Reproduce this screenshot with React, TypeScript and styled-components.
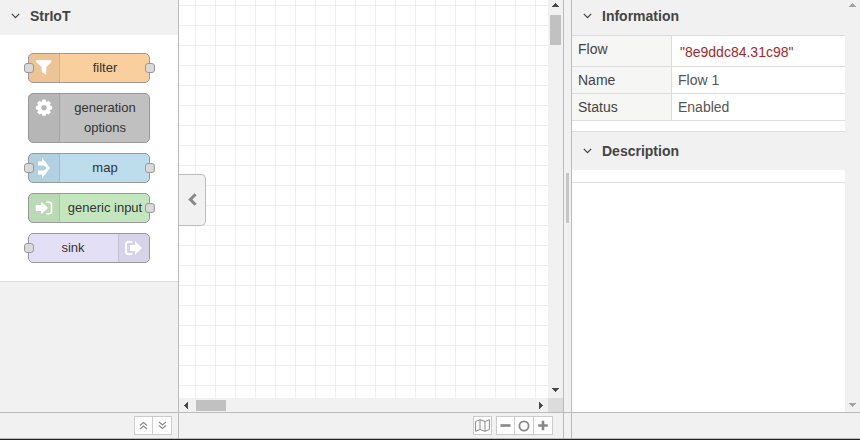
import React from "react";
import styled, { createGlobalStyle } from "styled-components";

const Global = createGlobalStyle`
  *, *::before, *::after { box-sizing: border-box; }
  body { margin: 0; background: #f1f1f1; overflow: hidden; }
  svg { display: block; flex: none; }
`;

const Editor = styled.div`
  width: 860px;
  height: 440px;
  display: grid;
  grid-template-columns: 179px 385px 7px 289px;
  grid-template-rows: 412px 27px 1px;
  overflow: hidden;
  background: #f1f1f1;
  font: 14px/20px "Liberation Sans", Arial, sans-serif;
  color: #444;
`;

const Palette = styled.section`
  border-right: 1px solid #bbb;
  overflow: hidden;
`;

const Header = styled.h3<{ $height: number; $ruled?: boolean }>`
  margin: 0;
  height: ${(p) => p.$height}px;
  display: flex;
  align-items: center;
  gap: 10px;
  padding: 0 0 ${(p) => (p.$ruled ? 1 : 3)}px 11px;
  font-size: 14px;
  font-weight: bold;
  line-height: 20px;
  background: #f1f1f1;
  color: #444;
  border-top: ${(p) => (p.$ruled ? "1px solid #ddd" : "none")};
`;

const NodeList = styled.div`
  display: flex;
  flex-direction: column;
  gap: 10px;
  height: 247px;
  padding: 18px 28px 0;
  background: #fff;
  border-bottom: 1px solid #ddd;
`;

const Node = styled.div<{ $color: string; $reverse?: boolean; $tall?: boolean }>`
  position: relative;
  display: flex;
  flex-direction: ${(p) => (p.$reverse ? "row-reverse" : "row")};
  width: 122px;
  height: ${(p) => (p.$tall ? 50 : 30)}px;
  flex: none;
  border: 1px solid #999;
  border-radius: 5px;
  background: ${(p) => p.$color};
`;

const NodeIcon = styled.div<{ $reverse?: boolean }>`
  width: 31px;
  flex: none;
  display: flex;
  justify-content: center;
  height: 100%;
  color: #fff;
  background: rgba(0, 0, 0, 0.05);
  border-${(p) => (p.$reverse ? "left" : "right")}: 1px solid rgba(0, 0, 0, 0.1);
  border-radius: ${(p) => (p.$reverse ? "0 4px 4px 0" : "4px 0 0 4px")};
  svg { height: 28px; width: 30px; }
`;

const NodeLabel = styled.div<{ $reverse?: boolean }>`
  flex: 1;
  padding: ${(p) => (p.$reverse ? "4px 1px 0 0" : "4px 0 0 1px")};
  text-align: center;
  font-size: 13px;
  line-height: 20px;
  color: #333;
  white-space: pre;
`;

const Port = styled.span<{ $side: "left" | "right" }>`
  position: absolute;
  top: 9px;
  ${(p) => p.$side}: ${(p) => (p.$side === "left" ? "-5px" : "-6px")};
  width: 10px;
  height: 10px;
  border: 1px solid #999;
  border-radius: 3px;
  background: #d9d9d9;
`;

const Workspace = styled.section`
  position: relative;
  display: grid;
  grid-template-columns: 369px 15px;
  grid-template-rows: 398px 14px;
  border-right: 1px solid #bbb;
`;

const Canvas = styled.div`
  background-color: #fff;
  background-image: linear-gradient(to right, #eee 1px, transparent 1px),
    linear-gradient(to bottom, #eee 1px, transparent 1px);
  background-size: 20px 20px;
  background-position: 16px 0, 0 5px;
`;

const VScroll = styled.div`
  display: flex;
  flex-direction: column;
  align-items: center;
  padding-bottom: 3px;
  background: #f1f1f1;
  color: #484848;
`;

const HScroll = styled.div`
  display: flex;
  align-items: center;
  background: #f1f1f1;
  color: #484848;
`;

const VThumb = styled.div`
  width: 11px;
  height: 30px;
  margin-bottom: auto;
  background: #c1c1c1;
`;

const HThumb = styled.div`
  width: 30px;
  height: 11px;
  margin-right: auto;
  background: #c1c1c1;
`;

const Corner = styled.div`
  background: #dcdcdc;
`;

const Collapse = styled.button`
  position: absolute;
  left: 0;
  top: 174px;
  width: 27px;
  height: 52px;
  padding: 0 0 1px 1px;
  display: flex;
  align-items: center;
  justify-content: center;
  border: 1px solid #bbb;
  border-left: 0;
  border-radius: 0 5px 5px 0;
  background: #f1f1f1;
  color: #888;
`;

const Separator = styled.div`
  display: flex;
  align-items: center;
  justify-content: center;
  padding-bottom: 16px;
`;

const Grip = styled.div`
  width: 3px;
  height: 50px;
  background: #c6c6c6;
`;

const Sidebar = styled.section`
  display: grid;
  grid-template-columns: 273px 15px;
  border-left: 1px solid #bbb;
  background: #fff;
`;

const FaintScroll = styled(VScroll)`
  justify-content: space-between;
  padding-bottom: 2px;
  color: #a3a3a3;
`;

const Properties = styled.div`
  display: grid;
  grid-template-columns: 100px 173px;
  grid-template-rows: 31px 27px 27px;
  height: 96px;
  border-top: 1px solid #ddd;
`;

const PropName = styled.div`
  padding: 3px 6px 0;
  background: #f6f6f4;
  color: #444;
  border-right: 1px solid #ddd;
  border-bottom: 1px solid #ddd;
`;

const PropValue = styled.div<{ $code?: boolean }>`
  padding: ${(p) => (p.$code ? "6px 8px 0" : "3px 6px 0")};
  color: ${(p) => (p.$code ? "#a0282e" : "#555")};
  border-bottom: 1px solid #ddd;
`;

const EmptyDescription = styled.div`
  height: 13px;
  border-bottom: 1px solid #ddd;
`;

const Footer = styled.footer<{ $divider?: boolean; $start?: boolean; $end: number }>`
  display: flex;
  justify-content: flex-end;
  align-items: flex-start;
  gap: 4px;
  padding: 3px ${(p) => p.$end}px 0 0;
  border-top: 1px solid #bbb;
  border-bottom: 1px solid #bbb;
  border-right: ${(p) => (p.$divider ? "1px solid #bbb" : "none")};
  border-left: ${(p) => (p.$start ? "1px solid #bbb" : "none")};
`;

const ButtonGroup = styled.div`
  display: flex;
  border: 1px solid #ccc;
  background: #fff;
`;

const ToolButton = styled.button<{ $width?: number }>`
  width: ${(p) => p.$width ?? 17}px;
  height: 17px;
  padding: 0;
  display: flex;
  align-items: center;
  justify-content: center;
  border: 0;
  background: transparent;
  color: #888;
  & + & { border-left: 1px solid #ccc; }
`;

const BottomEdge = styled.div`
  grid-column: 1 / -1;
  background: #222;
`;

type Direction = "up" | "down" | "left" | "right";
const arrowPaths: Record<Direction, string> = {
  up: "M7 3h1v1h1v1h1v1h1v1H4V6h1V5h1V4h1z",
  down: "M4 8h7v1h-1v1H9v1H8v1H7v-1H6v-1H5V9H4z",
  left: "M5 7h1V6h1V5h1V4h1v7H8v-1H7V9H6V8H5z",
  right: "M8 4h1v1h1v1h1v1h1v1h-1v1h-1v1H9v1H8z",
};

const ScrollArrow = ({ to }: { to: Direction }) => {
  const horizontal = to === "left" || to === "right";
  return (
    <svg
      width={horizontal ? 17 : 15}
      height={horizontal ? 14 : 15}
      viewBox={horizontal ? "0 0 17 14" : "0 0 15 15"}
      fill="currentColor"
      shapeRendering="crispEdges"
    >
      <path d={arrowPaths[to]} />
    </svg>
  );
};

const AngleDown = () => (
  <svg width="9" height="6" viewBox="0 0 9 6" fill="none" stroke="currentColor" strokeWidth="1.25">
    <path d="M.8 .9 4.5 4.6 8.2 .9" />
  </svg>
);

type IconKind = "funnel" | "gear" | "arrows" | "arrowIn" | "arrowOut";

const gearTeeth = [0, 45, 90, 135, 180, 225, 270, 315];

const Glyph = ({ kind }: { kind: IconKind }) => (
  <svg viewBox="0 0 30 28" fill="currentColor">
    {kind === "funnel" && <path d="M7 6.2h15.6l-.4 2-5 5.1v7.8l-4.5-3.3v-4.5l-5.3-5z" />}
    {kind === "gear" && (
      <g transform="translate(15 13.7)">
        {gearTeeth.map((angle) => (
          <path key={angle} transform={`rotate(${angle})`} d="M-2.4-5-1.6-8.1h3.2L2.4-5z" />
        ))}
        <circle r="4.6" fill="none" stroke="currentColor" strokeWidth="3.6" />
      </g>
    )}
    {kind === "arrows" && (
      <path
        fillRule="evenodd"
        d="M9 7.4h4V3.4L21 14l-8 10.6v-4H9v-4h6l2.8-2.6L15 11.4H9z"
      />
    )}
    {kind === "arrowIn" && (
      <>
        <path d="M6.8 11h5.3V7.8l7 6.2-7 6.2V17H6.8z" />
        <path d="M17.4 8.3h3q2.1 0 2.1 2.1v7.2q0 2.1-2.1 2.1h-3" fill="none" stroke="currentColor" strokeWidth="1.6" />
      </>
    )}
    {kind === "arrowOut" && (
      <>
        <path d="M11 11h5V7.3l7 6.7-7 6.7V17h-5z" />
        <path d="M13.2 7.8H9.3Q7 7.8 7 10.1v7.8q0 2.3 2.3 2.3h3.9" fill="none" stroke="currentColor" strokeWidth="1.7" />
      </>
    )}
  </svg>
);

interface NodeType {
  label: string;
  color: string;
  icon: IconKind;
  input?: boolean;
  output?: boolean;
  reverse?: boolean;
  tall?: boolean;
}

const nodeTypes: NodeType[] = [
  { label: "filter", color: "#f9cf9e", icon: "funnel", input: true, output: true },
  { label: "generation\noptions", color: "#c0c0c0", icon: "gear", tall: true },
  { label: "map", color: "#bddcec", icon: "arrows", input: true, output: true },
  { label: "generic input", color: "#c4e6bf", icon: "arrowIn", output: true },
  { label: "sink", color: "#e3e0f6", icon: "arrowOut", input: true, reverse: true },
];

const properties = [
  { name: "Flow", value: '"8e9ddc84.31c98"', code: true },
  { name: "Name", value: "Flow 1" },
  { name: "Status", value: "Enabled" },
];

const DoubleAngle = ({ down = false }: { down?: boolean }) => (
  <svg width="9" height="9" viewBox="0 0 9 9" fill="none" stroke="currentColor" strokeWidth="1.1">
    <path d={down ? "m1 1 3.5 3L8 1M1 4.5l3.5 3 3.5-3" : "m1 4.5 3.5-3 3.5 3M1 8l3.5-3L8 8"} />
  </svg>
);

export default function App() {
  return (
    <>
      <Global />
      <Editor>
        <Palette>
          <Header $height={35}>
            <AngleDown />
            StrIoT
          </Header>
          <NodeList>
            {nodeTypes.map((n) => (
              <Node key={n.label} $color={n.color} $reverse={n.reverse} $tall={n.tall}>
                <NodeIcon $reverse={n.reverse}>
                  <Glyph kind={n.icon} />
                </NodeIcon>
                <NodeLabel $reverse={n.reverse}>{n.label}</NodeLabel>
                {n.input && <Port $side="left" />}
                {n.output && <Port $side="right" />}
              </Node>
            ))}
          </NodeList>
        </Palette>

        <Workspace>
          <Canvas />
          <VScroll>
            <ScrollArrow to="up" />
            <VThumb />
            <ScrollArrow to="down" />
          </VScroll>
          <HScroll>
            <ScrollArrow to="left" />
            <HThumb />
            <ScrollArrow to="right" />
          </HScroll>
          <Corner />
          <Collapse aria-label="Toggle palette">
            <svg width="9" height="13" viewBox="0 0 9 13" fill="none" stroke="currentColor" strokeWidth="3">
              <path d="M7.6 1.2 2.3 6.5l5.3 5.3" />
            </svg>
          </Collapse>
        </Workspace>

        <Separator>
          <Grip />
        </Separator>

        <Sidebar>
          <div>
            <Header $height={35}>
              <AngleDown />
              Information
            </Header>
            <Properties>
              {properties.map((p) => (
                <React.Fragment key={p.name}>
                  <PropName>{p.name}</PropName>
                  <PropValue $code={p.code}>{p.value}</PropValue>
                </React.Fragment>
              ))}
            </Properties>
            <Header $height={39} $ruled>
              <AngleDown />
              Description
            </Header>
            <EmptyDescription />
          </div>
          <FaintScroll>
            <ScrollArrow to="up" />
            <ScrollArrow to="down" />
          </FaintScroll>
        </Sidebar>

        <Footer $end={6} $divider>
          <ButtonGroup>
            <ToolButton aria-label="Collapse all">
              <DoubleAngle />
            </ToolButton>
            <ToolButton $width={19} aria-label="Expand all">
              <DoubleAngle down />
            </ToolButton>
          </ButtonGroup>
        </Footer>
        <Footer $end={10} $divider>
          <ButtonGroup>
            <ToolButton aria-label="Navigator">
              <svg width="15" height="13" viewBox="0 0 15 13" fill="none" stroke="currentColor" strokeWidth="1">
                <path d="M.6 2.5 5 .7l5 1.8L14.4.7v9.8L10 12.3l-5-1.8-4.4 1.8zM5 .7v9.8M10 2.5v9.8" />
              </svg>
            </ToolButton>
          </ButtonGroup>
          <ButtonGroup>
            <ToolButton aria-label="Zoom out">
              <svg width="11" height="11" viewBox="0 0 11 11" stroke="currentColor" strokeWidth="2.6">
                <path d="M.5 5.5h10" />
              </svg>
            </ToolButton>
            <ToolButton $width={19} aria-label="Reset zoom">
              <svg width="12" height="12" viewBox="0 0 12 12" fill="none" stroke="currentColor" strokeWidth="1.8">
                <circle cx="6" cy="6" r="4.6" />
              </svg>
            </ToolButton>
            <ToolButton $width={19} aria-label="Zoom in">
              <svg width="10" height="11" viewBox="0 0 10 11" stroke="currentColor" strokeWidth="2.6">
                <path d="M.2 5.5h9.6M5 .7v9.6" />
              </svg>
            </ToolButton>
          </ButtonGroup>
        </Footer>
        <Footer $end={0} />
        <Footer $end={0} $start />
        <BottomEdge />
      </Editor>
    </>
  );
}
